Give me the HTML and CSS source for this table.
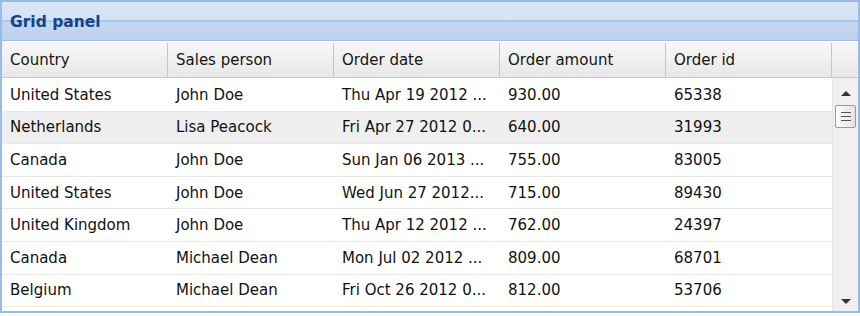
FILE: index.html
```html
<!DOCTYPE html>
<html>
<head>
<meta charset="utf-8">
<link rel="stylesheet" href="styles.css">
</head>
<body>
<div class="panel">
  <div class="panel-header"><span class="panel-title">Grid panel</span></div>
  <div class="grid-head">
    <div class="hcell">Country</div>
    <div class="hcell">Sales person</div>
    <div class="hcell">Order date</div>
    <div class="hcell">Order amount</div>
    <div class="hcell">Order id</div>
    <div class="hcell hlast"></div>
  </div>
  <div class="grid-body">
    <div class="rows">
      <div class="row"><div class="cell">United States</div><div class="cell">John Doe</div><div class="cell">Thu Apr 19 2012 ...</div><div class="cell">930.00</div><div class="cell">65338</div></div>
      <div class="row alt"><div class="cell">Netherlands</div><div class="cell">Lisa Peacock</div><div class="cell">Fri Apr 27 2012 0...</div><div class="cell">640.00</div><div class="cell">31993</div></div>
      <div class="row"><div class="cell">Canada</div><div class="cell">John Doe</div><div class="cell">Sun Jan 06 2013 ...</div><div class="cell">755.00</div><div class="cell">83005</div></div>
      <div class="row"><div class="cell">United States</div><div class="cell">John Doe</div><div class="cell">Wed Jun 27 2012...</div><div class="cell">715.00</div><div class="cell">89430</div></div>
      <div class="row"><div class="cell">United Kingdom</div><div class="cell">John Doe</div><div class="cell">Thu Apr 12 2012 ...</div><div class="cell">762.00</div><div class="cell">24397</div></div>
      <div class="row"><div class="cell">Canada</div><div class="cell">Michael Dean</div><div class="cell">Mon Jul 02 2012 ...</div><div class="cell">809.00</div><div class="cell">68701</div></div>
      <div class="row"><div class="cell">Belgium</div><div class="cell">Michael Dean</div><div class="cell">Fri Oct 26 2012 0...</div><div class="cell">812.00</div><div class="cell">53706</div></div>
    </div>
    <div class="scrollbar">
      <div class="arrow up"></div>
      <div class="thumb"><span></span><span></span><span></span></div>
      <div class="track"></div>
      <div class="arrow down"></div>
    </div>
  </div>
</div>
</body>
</html>
```
FILE: styles.css
```css
html, body {
  margin: 0;
  padding: 0;
  background: #ffffff;
}
body {
  font-family: "DejaVu Sans", sans-serif;
  font-size: 15px;
  color: #111111;
}
.panel {
  width: 860px;
  height: 313px;
  box-sizing: border-box;
  border: 2px solid #99bbe8;
  display: flex;
  flex-direction: column;
}
.panel-header {
  height: 39px;
  flex: none;
  box-sizing: border-box;
  background: linear-gradient(to bottom, #dbe7f7 0, #d3e2f5 18px, #a9c5ea 18px, #a9c5ea 20px, #c3d7f1 20px, #bcd2ef 100%);
  border-bottom: 1px solid #a4c0e6;
  display: flex;
  align-items: center;
  padding-left: 8px;
  padding-top: 2px;
}
.panel-title {
  font-weight: bold;
  font-size: 15.5px;
  color: #15428b;
}
.grid-head {
  display: flex;
  flex: none;
  height: 37px;
  box-sizing: border-box;
  background: linear-gradient(to bottom, #f8f8f8, #e8e8e8);
  border-bottom: 1px solid #c9c9c9;
  padding-top: 2px;
}
.hcell {
  width: 166px;
  box-sizing: border-box;
  border-right: 1px solid #c5c5c5;
  padding-left: 8px;
  display: flex;
  align-items: center;
  color: #151515;
}
.hlast {
  flex: 1;
  border-right: none;
}
.grid-body {
  display: flex;
  flex: 1;
}
.rows {
  width: 830px;
  display: flex;
  flex-direction: column;
  padding-top: 1px;
}
.row {
  display: flex;
  height: 32.6px;
  box-sizing: border-box;
  border-bottom: 1px solid #e8e8e8;
}
.row.alt {
  background: #efefef;
}
.cell {
  width: 166px;
  box-sizing: border-box;
  padding-left: 8px;
  display: flex;
  align-items: center;
  white-space: nowrap;
  overflow: hidden;
}
.scrollbar {
  flex: 1;
  background: #f0f0f0;
  border-left: 1px solid #e6e6e6;
  display: flex;
  flex-direction: column;
  align-items: center;
}
.arrow {
  width: 0;
  height: 0;
  border-left: 5px solid transparent;
  border-right: 5px solid transparent;
}
.arrow.up {
  margin-top: 13px;
  border-bottom: 5px solid #333333;
}
.arrow.down {
  margin-bottom: 7px;
  border-top: 5px solid #333333;
}
.thumb {
  margin-top: 9px;
  width: 21px;
  height: 23px;
  box-sizing: border-box;
  border: 1px solid #9a9a9a;
  border-radius: 2px;
  background: linear-gradient(to right, #fdfdfd, #e4e4e4);
  display: flex;
  flex-direction: column;
  justify-content: center;
  align-items: center;
  gap: 3px;
}
.thumb span {
  width: 10px;
  height: 1px;
  background: #555555;
}
.track {
  flex: 1;
}
```
